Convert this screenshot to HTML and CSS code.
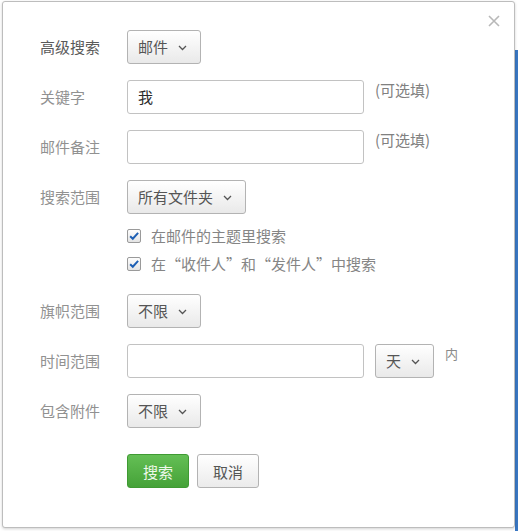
FILE: index.html
```html
<!DOCTYPE html>
<html lang="zh-CN">
<head>
<meta charset="utf-8">
<title>高级搜索</title>
<link rel="stylesheet" href="styles.css">
</head>
<body>
<div class="dialog">
  <span class="close">
    <svg width="12" height="12" viewBox="0 0 12 12"><path d="M1 1L11 11M11 1L1 11" stroke="#b8b8b8" stroke-width="1.6" fill="none"/></svg>
  </span>
  <div class="form">
    <div class="row">
      <span class="label label-dark">高级搜索</span>
      <span class="select">邮件<svg class="chev" width="9" height="6" viewBox="0 0 9 6"><path d="M1 1L4.5 4.5L8 1" stroke="#555" stroke-width="1.3" fill="none"/></svg></span>
    </div>
    <div class="row">
      <span class="label">关键字</span>
      <span class="input"><span class="value">我</span></span>
      <span class="hint">(可选填)</span>
    </div>
    <div class="row">
      <span class="label">邮件备注</span>
      <span class="input"></span>
      <span class="hint">(可选填)</span>
    </div>
    <div class="row">
      <span class="label">搜索范围</span>
      <span class="select">所有文件夹<svg class="chev" width="9" height="6" viewBox="0 0 9 6"><path d="M1 1L4.5 4.5L8 1" stroke="#555" stroke-width="1.3" fill="none"/></svg></span>
    </div>
    <div class="checks">
      <div class="check">
        <span class="box"><svg width="14" height="14" viewBox="0 0 14 14"><path d="M2.5 7.2L5.6 10.2L11.8 3.4" stroke="#1d5fb4" stroke-width="2.3" fill="none"/></svg></span>
        <span class="check-text">在邮件的主题里搜索</span>
      </div>
      <div class="check">
        <span class="box"><svg width="14" height="14" viewBox="0 0 14 14"><path d="M2.5 7.2L5.6 10.2L11.8 3.4" stroke="#1d5fb4" stroke-width="2.3" fill="none"/></svg></span>
        <span class="check-text">在“收件人”和“发件人”中搜索</span>
      </div>
    </div>
    <div class="row">
      <span class="label">旗帜范围</span>
      <span class="select">不限<svg class="chev" width="9" height="6" viewBox="0 0 9 6"><path d="M1 1L4.5 4.5L8 1" stroke="#555" stroke-width="1.3" fill="none"/></svg></span>
    </div>
    <div class="row">
      <span class="label">时间范围</span>
      <span class="input"></span>
      <span class="select">天<svg class="chev" width="9" height="6" viewBox="0 0 9 6"><path d="M1 1L4.5 4.5L8 1" stroke="#555" stroke-width="1.3" fill="none"/></svg></span>
      <span class="hint hint-small">内</span>
    </div>
    <div class="row">
      <span class="label">包含附件</span>
      <span class="select">不限<svg class="chev" width="9" height="6" viewBox="0 0 9 6"><path d="M1 1L4.5 4.5L8 1" stroke="#555" stroke-width="1.3" fill="none"/></svg></span>
    </div>
    <div class="row actions">
      <span class="label"></span>
      <span class="btn btn-primary">搜索</span>
      <span class="btn">取消</span>
    </div>
  </div>
</div>
</body>
</html>
```
FILE: styles.css
```css
html, body {
  margin: 0;
  height: 100%;
}
body {
  padding: 1px 0 0 2px;
  box-sizing: border-box;
  background: #fff linear-gradient(#3a77c2, #3a77c2) no-repeat right 0 top 50px / 3px 100%;
  font-family: "Noto Sans CJK SC", "Microsoft YaHei", sans-serif;
  font-size: 15px;
  color: #555;
}
.dialog {
  position: relative;
  width: 513px;
  height: 527px;
  box-sizing: border-box;
  background: #fff;
  border: 1px solid #bdbdbd;
  border-radius: 3px;
  box-shadow: 0 1px 3px rgba(0,0,0,0.18);
  padding: 28px 0 0 37px;
}
.close {
  position: absolute;
  top: 13px;
  right: 14px;
  width: 12px;
  height: 12px;
  display: flex;
}
.form {
  display: flex;
  flex-direction: column;
  gap: 16px;
}
.row {
  display: flex;
  align-items: center;
  height: 34px;
}
.label {
  width: 87px;
  flex: none;
  color: #919191;
  line-height: 20px;
}
.label-dark {
  color: #5a5a5a;
}
.select {
  display: flex;
  align-items: center;
  height: 34px;
  box-sizing: border-box;
  padding: 0 13px 0 10px;
  border: 1px solid #b3b3b3;
  border-radius: 3px;
  background: linear-gradient(#ffffff, #e9e9e9);
  color: #555;
  line-height: 20px;
}
.chev {
  margin-left: 10px;
  margin-top: 1px;
}
.input {
  display: flex;
  align-items: center;
  width: 237px;
  height: 34px;
  box-sizing: border-box;
  border: 1px solid #c2c2c2;
  border-radius: 3px;
  background: #fff;
  padding-left: 10px;
}
.value {
  color: #2a2a2a;
  line-height: 20px;
}
.hint {
  align-self: flex-start;
  margin-left: 11px;
  line-height: 20px;
  color: #808080;
}
.input + .select {
  margin-left: 11px;
}
.hint-small {
  font-size: 13px;
  color: #8a8a8a;
}
.checks {
  display: flex;
  flex-direction: column;
  margin: -8px 0 0 87px;
}
.check {
  display: flex;
  align-items: center;
  height: 28px;
}
.box {
  width: 14px;
  height: 14px;
  box-sizing: border-box;
  border: 1px solid #9a9a9a;
  border-radius: 2px;
  background: linear-gradient(#fdfdfd, #e4e4e4);
  display: flex;
  align-items: center;
  justify-content: center;
  overflow: visible;
}
.check-text {
  margin-left: 10px;
  color: #858585;
  line-height: 20px;
}
.actions {
  margin-top: 10px;
}
.btn {
  width: 62px;
  height: 34px;
  box-sizing: border-box;
  display: flex;
  align-items: center;
  justify-content: center;
  border: 1px solid #b3b3b3;
  border-radius: 3px;
  background: linear-gradient(#ffffff, #ebebeb);
  color: #555;
  margin-right: 8px;
}
.btn-primary {
  border-color: #3f9a33;
  background: linear-gradient(#64bf55, #45a238);
  color: #eef8ea;
}
```
